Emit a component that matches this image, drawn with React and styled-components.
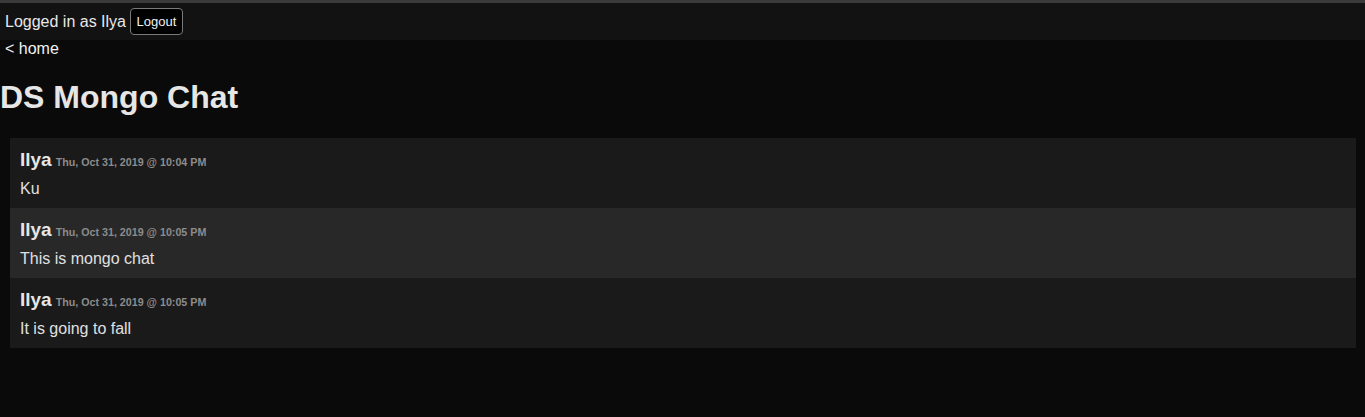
import React from "react";
import styled, { createGlobalStyle } from "styled-components";

const Global = createGlobalStyle`
  html, body { margin: 0; padding: 0; background: #0a0a0a; }
  body {
    font-family: "Liberation Sans", Arial, sans-serif;
    color: #e6e6e6;
    border-top: 3px solid #3a3a3a;
  }
`;

const TopBar = styled.header`
  display: flex;
  align-items: center;
  gap: 4px;
  height: 37px;
  padding: 0 5px;
  background: #121212;
  font-size: 16px;
  color: #e8e8e8;
`;

const Button = styled.button`
  font-family: "Liberation Sans", Arial, sans-serif;
  font-size: 13px;
  color: #f0f0f0;
  background: #000;
  border: 1px solid #7a7a7a;
  border-radius: 4px;
  height: 27px;
  padding: 0 5px;
  min-width: 53px;
`;

const HomeLink = styled.a`
  display: block;
  padding: 0 5px;
  font-size: 16px;
  line-height: 18px;
  color: #f2f2f2;
  text-decoration: none;
`;

const Title = styled.h1`
  margin: 21px 0 22px;
  font-size: 32px;
  line-height: 37px;
  font-weight: bold;
  color: #e6e6e6;
`;

const List = styled.div`
  margin: 0 9px 0 10px;
  display: flex;
  flex-direction: column;
`;

const Message = styled.div`
  background: ${(p) => (p.$alt ? "#282828" : "#1a1a1a")};
  padding: 11px 10px 10px;
  height: 70px;
  box-sizing: border-box;
`;

const Head = styled.div`
  display: flex;
  align-items: baseline;
  gap: 4px;
  line-height: 22px;
  height: 22px;
`;

const Name = styled.span`
  font-size: 19px;
  font-weight: bold;
  color: #e6e6e6;
`;

const DateText = styled.span`
  font-size: 10.7px;
  font-weight: bold;
  color: #8c8c8c;
`;

const Body = styled.div`
  margin-top: 9px;
  font-size: 16px;
  line-height: 18px;
  color: #e0e0e0;
`;

const messages = [
  { name: "Ilya", date: "Thu, Oct 31, 2019 @ 10:04 PM", text: "Ku" },
  { name: "Ilya", date: "Thu, Oct 31, 2019 @ 10:05 PM", text: "This is mongo chat" },
  { name: "Ilya", date: "Thu, Oct 31, 2019 @ 10:05 PM", text: "It is going to fall" },
];

export default function App() {
  return (
    <>
      <Global />
      <TopBar>
        <span>Logged in as Ilya</span>
        <Button>Logout</Button>
      </TopBar>
      <HomeLink href="#">&lt; home</HomeLink>
      <Title>DS Mongo Chat</Title>
      <List>
        {messages.map((m, i) => (
          <Message key={i} $alt={i % 2 === 1}>
            <Head>
              <Name>{m.name}</Name>
              <DateText>{m.date}</DateText>
            </Head>
            <Body>{m.text}</Body>
          </Message>
        ))}
      </List>
    </>
  );
}
